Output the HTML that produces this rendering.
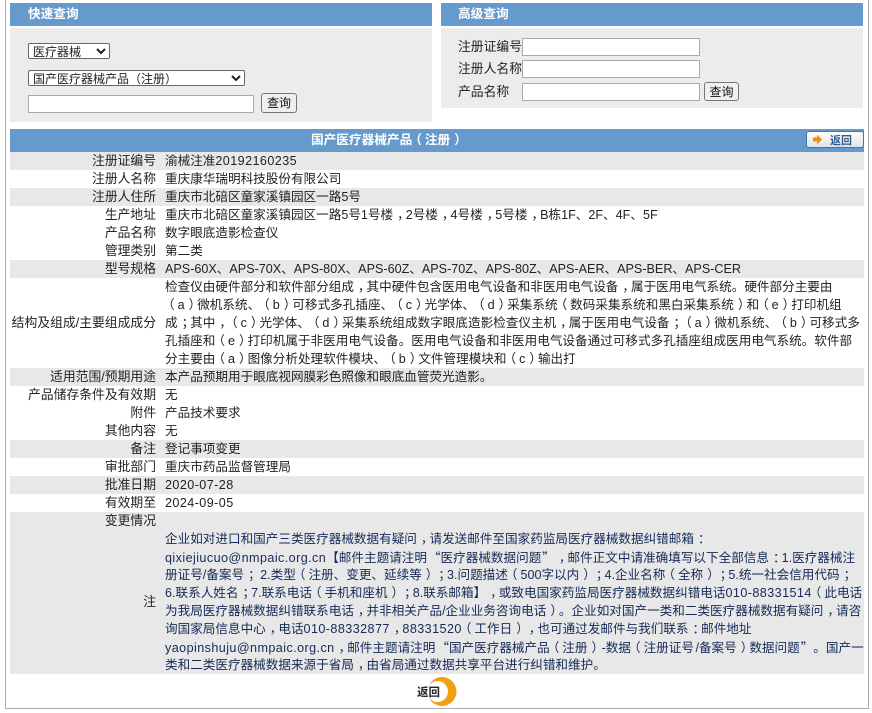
<!DOCTYPE html>
<html lang="zh"><head><meta charset="utf-8"><title>国产医疗器械产品（注册）</title>
<style>
html,body{margin:0;padding:0;background:#fff;width:872px;height:713px;overflow:hidden}
body{position:relative;font-family:"Liberation Sans","Noto Sans CJK SC",sans-serif;font-size:12.6px;color:#222;text-spacing-trim:space-all;font-kerning:none}
.a{position:absolute}
.frame{left:5px;top:-2px;width:862px;height:709px;border:1px solid #aaa}
.h{background:#6699cc;height:23px}
.t{color:#fff;font-weight:bold;line-height:23px;white-space:nowrap;font-size:12.67px}
.p{background:#ececec}
.g{background:#e8e8e8;left:10px;width:854px}
.l{right:716px;text-align:right;white-space:nowrap;line-height:18px;font-size:12.8px}
.v{left:165px;white-space:nowrap;line-height:18px}
.n{color:#152a58}
.d{letter-spacing:.42px}
.q{font-family:"Noto Sans CJK SC",sans-serif;margin-left:1px}
.w{margin-left:1.5px}
i,s,u{font-style:normal;text-decoration:none;position:relative}
i{left:4px}
s{left:-3px}
u{left:4px}
input{position:absolute;box-sizing:border-box;border:1px solid #aaa;background:#fff;padding:0;margin:0}
.btn{position:absolute;box-sizing:border-box;border:1px solid #777;border-radius:3px;background:#efefef;text-align:center;font-size:12px;line-height:18px;color:#111}
select{position:absolute;box-sizing:border-box;margin:0;padding:0;border:1px solid #666;border-radius:2px;background:#fff;font:12px "Liberation Sans","Noto Sans CJK SC",sans-serif;color:#222;text-spacing-trim:space-all}
</style></head><body>
<div class="a frame"></div>

<div class="a h" style="left:10px;top:3px;width:422px"></div>
<div class="a t" style="left:28px;top:3px">快速查询</div>
<div class="a p" style="left:10px;top:28px;width:422px;height:94px"></div>
<select style="left:28px;top:43px;width:82px;height:16px"><option>医疗器械</option></select>
<select style="left:28px;top:70px;width:217px;height:16px"><option>国产医疗器械产品（注册）</option></select>
<input style="left:28px;top:95px;width:226px;height:18px">
<div class="btn" style="left:261px;top:93px;width:36px;height:20px">查询</div>

<div class="a h" style="left:441px;top:3px;width:422px"></div>
<div class="a t" style="left:458px;top:3px">高级查询</div>
<div class="a p" style="left:441px;top:28px;width:422px;height:80px"></div>
<div class="a" style="left:458px;top:38px;line-height:18px;font-size:12.8px">注册证编号</div>
<div class="a" style="left:458px;top:60px;line-height:18px;font-size:12.8px">注册人名称</div>
<div class="a" style="left:458px;top:83px;line-height:18px;font-size:12.8px">产品名称</div>
<input style="left:522px;top:38px;width:178px;height:18px">
<input style="left:522px;top:60px;width:178px;height:18px">
<input style="left:522px;top:83px;width:178px;height:18px">
<div class="btn" style="left:704px;top:82px;width:35px;height:19px">查询</div>

<div class="a h" style="left:10px;top:129px;width:854px"></div>
<div class="a t" style="left:311px;top:129px">国产医疗器械产品<s>（</s>注册<u>）</u></div>
<div class="a" style="left:806px;top:131px;width:58px;height:17px;box-sizing:border-box;border:1px solid #3f78a8;border-radius:3px;background:linear-gradient(#fff,#dfe3e8)">
<svg width="56" height="15" style="display:block"><path d="M6 5.5h4V2.5l5 5-5 5v-3H6z" fill="#ee8c10"/><text x="23" y="12" font-size="11" font-weight="bold" fill="#2f5f8f" font-family="Liberation Sans,Noto Sans CJK SC,sans-serif">返回</text></svg></div>

<div class="a g" style="top:152px;height:18px"></div>
<div class="a g" style="top:188px;height:18px"></div>
<div class="a g" style="top:260px;height:18px"></div>
<div class="a g" style="top:368px;height:18px"></div>
<div class="a g" style="top:440px;height:18px"></div>
<div class="a g" style="top:476px;height:18px"></div>
<div class="a g" style="top:512px;height:162px"></div>

<div class="a l" style="top:152px">注册证编号</div><div class="a v" style="top:152px">渝械注准<span class="d">20192160235</span></div>
<div class="a l" style="top:170px">注册人名称</div><div class="a v" style="top:170px">重庆康华瑞明科技股份有限公司</div>
<div class="a l" style="top:188px">注册人住所</div><div class="a v" style="top:188px">重庆市北碚区童家溪镇园区一路5号</div>
<div class="a l" style="top:206px">生产地址</div><div class="a v" style="top:206px">重庆市北碚区童家溪镇园区一路5号1号楼<i>，</i>2号楼<i>，</i>4号楼<i>，</i>5号楼<i>，</i>B栋1F、2F、4F、5F</div>
<div class="a l" style="top:224px">产品名称</div><div class="a v" style="top:224px">数字眼底造影检查仪</div>
<div class="a l" style="top:242px">管理类别</div><div class="a v" style="top:242px">第二类</div>
<div class="a l" style="top:260px">型号规格</div><div class="a v" style="top:260px">APS-60X、APS-70X、APS-80X、APS-60Z、APS-70Z、APS-80Z、APS-AER、APS-BER、APS-CER</div>

<div class="a l" style="top:314px">结构及组成/主要组成成分</div>
<div class="a v" style="top:278px">检查仪由硬件部分和软件部分组成<i>，</i>其中硬件包含医用电气设备和非医用电气设备<i>，</i>属于医用电气系统。硬件部分主要由</div>
<div class="a v" style="top:296px"><s>（</s>a<u>）</u>微机系统、<s>（</s>b<u>）</u>可移式多孔插座、<s>（</s>c<u>）</u>光学体、<s>（</s>d<u>）</u>采集系统<s>（</s>数码采集系统和黑白采集系统<u>）</u>和<s>（</s>e<u>）</u>打印机组</div>
<div class="a v" style="top:314px">成<i>；</i>其中<i>，</i><s>（</s>c<u>）</u>光学体、<s>（</s>d<u>）</u>采集系统组成数字眼底造影检查仪主机<i>，</i>属于医用电气设备<i>；</i><s>（</s>a<u>）</u>微机系统、<s>（</s>b<u>）</u>可移式多</div>
<div class="a v" style="top:332px">孔插座和<s>（</s>e<u>）</u>打印机属于非医用电气设备。医用电气设备和非医用电气设备通过可移式多孔插座组成医用电气系统。软件部</div>
<div class="a v" style="top:350px">分主要由<s>（</s>a<u>）</u>图像分析处理软件模块、<s>（</s>b<u>）</u>文件管理模块和<s>（</s>c<u>）</u>输出打</div>

<div class="a l" style="top:368px">适用范围/预期用途</div><div class="a v" style="top:368px">本产品预期用于眼底视网膜彩色照像和眼底血管荧光造影。</div>
<div class="a l" style="top:386px">产品储存条件及有效期</div><div class="a v" style="top:386px">无</div>
<div class="a l" style="top:404px">附件</div><div class="a v" style="top:404px">产品技术要求</div>
<div class="a l" style="top:422px">其他内容</div><div class="a v" style="top:422px">无</div>
<div class="a l" style="top:440px">备注</div><div class="a v" style="top:440px">登记事项变更</div>
<div class="a l" style="top:458px">审批部门</div><div class="a v" style="top:458px">重庆市药品监督管理局</div>
<div class="a l" style="top:476px">批准日期</div><div class="a v d" style="top:476px">2020-07-28</div>
<div class="a l" style="top:494px">有效期至</div><div class="a v d" style="top:494px">2024-09-05</div>
<div class="a l" style="top:512px">变更情况</div>

<div class="a l" style="top:593px">注</div>
<div class="a v n" style="top:530px">企业如对进口和国产三类医疗器械数据有疑问<i>，</i>请发送邮件至国家药监局医疗器械数据纠错邮箱<i>：</i></div>
<div class="a v n" style="top:548px"><span class="d">qixiejiucuo@nmpaic.org.cn</span>【邮件主题请注明<span class="q">“</span>医疗器械数据问题<span class="q">”</span><i>，</i>邮件正文中请准确填写以下全部信息<i>：</i>1.医疗器械注</div>
<div class="a v n" style="top:566px">册证号/备案号<i>；</i> 2.类型<s>（</s>注册、变更、延续等<u>）</u><i>；</i>3.问题描述<s>（</s>500字以内<u>）</u><i>；</i>4.企业名称<s>（</s>全称<u>）</u><i>；</i>5.统一社会信用代码<i>；</i></div>
<div class="a v n" style="top:584px">6.联系人姓名<i>；</i>7.联系电话<s>（</s>手机和座机<u>）</u><i>；</i>8.联系邮箱】<i>，</i>或致电国家药监局医疗器械数据纠错电话<span class="d">010-88331514</span><s>（</s>此电话</div>
<div class="a v n" style="top:602px">为我局医疗器械数据纠错联系电话<i>，</i>并非相关产品/企业业务咨询电话<u>）</u>。企业如对国产一类和二类医疗器械数据有疑问<i>，</i>请咨</div>
<div class="a v n" style="top:620px">询国家局信息中心<i>，</i>电话<span class="d">010-88332877</span><i>，</i><span class="d">88331520</span><s>（</s>工作日<u>）</u><i>，</i>也可通过发邮件与我们联系<i>：</i>邮件地址</div>
<div class="a v n" style="top:638px"><span class="d">yaopinshuju@nmpaic.org.cn</span><i>，</i>邮件主题请注明<span class="q">“</span>国产医疗器械产品<s>（</s>注册<u>）</u><span class="w">-</span>数据<s>（</s>注册证号<span class="w">/</span>备案号<u>）</u>数据问题<span class="q">”</span>。国产一</div>
<div class="a v n" style="top:656px">类和二类医疗器械数据来源于省局<i>，</i>由省局通过数据共享平台进行纠错和维护。</div>

<svg class="a" style="left:415px;top:676px" width="46" height="32">
<circle cx="27" cy="15.5" r="14.5" fill="#f0a010"/><circle cx="22.5" cy="15.5" r="10.5" fill="#fff"/>
<text x="2" y="20" font-size="11.5" font-weight="bold" fill="#222" font-family="Liberation Sans,Noto Sans CJK SC,sans-serif">返回</text></svg>
</body></html>
